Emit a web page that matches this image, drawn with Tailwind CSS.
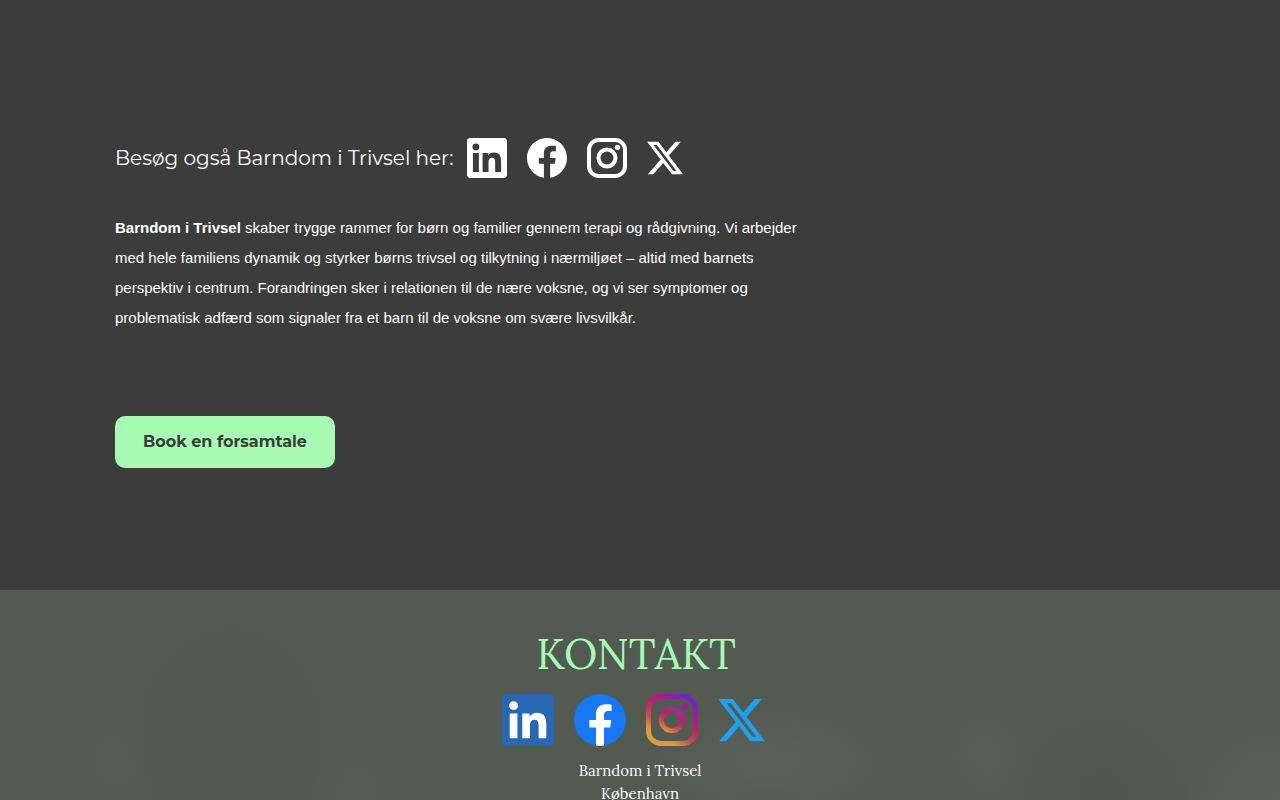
<!DOCTYPE html>
<html lang="da">

<head>
    <meta charset="UTF-8">
    <meta name="viewport" content="width=device-width, initial-scale=1.0">
    <title>Barndom i Trivsel</title>
    <script src="https://cdn.jsdelivr.net/npm/@tailwindcss/browser@4"></script>
</head>

<body class="bg-[#3c3c3c] font-['Liberation_Sans',Arial,sans-serif] text-white">
    <!-- Shared icon shapes -->
    <svg class="hidden" aria-hidden="true">
        <symbol id="linkedin" viewBox="0 0 24 24">
            <path d="M20.447 20.452h-3.554v-5.569c0-1.328-.027-3.037-1.852-3.037-1.853 0-2.136 1.445-2.136 2.939v5.667H9.351V9h3.414v1.561h.046c.477-.9 1.637-1.85 3.37-1.85 3.601 0 4.267 2.37 4.267 5.455v6.286zM5.337 7.433a2.062 2.062 0 0 1-2.063-2.065 2.064 2.064 0 1 1 2.063 2.065zm1.782 13.019H3.555V9h3.564v11.452zM22.225 0H1.771C.792 0 0 .774 0 1.729v20.542C0 23.227.792 24 1.771 24h20.451C23.2 24 24 23.227 24 22.271V1.729C24 .774 23.2 0 22.222 0h.003z"/>
        </symbol>
        <symbol id="facebook" viewBox="0 0 24 24">
            <path d="M24 12c0-6.627-5.373-12-12-12S0 5.373 0 12c0 5.99 4.388 10.954 10.125 11.854v-8.385H7.078V12h3.047V9.357c0-3.007 1.792-4.669 4.533-4.669 1.312 0 2.686.235 2.686.235v2.953H15.83c-1.491 0-1.956.925-1.956 1.874V12h3.328l-.532 3.469h-2.796v8.385C19.612 22.954 24 17.989 24 12z"/>
        </symbol>
        <symbol id="x" viewBox="1.2 0 24 24">
            <path d="M18.244 2.25h3.308l-7.227 8.26 8.502 11.24H16.17l-5.214-6.817L4.99 21.75H1.68l7.73-8.835L1.254 2.25H8.08l4.713 6.231zm-1.161 17.52h1.833L7.084 4.126H5.117z"/>
        </symbol>
    </svg>

    <section>
        <div class="max-w-[1050px] mx-auto pt-[138px] pb-[122px]">
            <div class="flex items-center gap-3.5">
                <h2 class="font-[Montserrat,Inter,sans-serif] text-[20px] leading-10">Besøg også Barndom i Trivsel her:</h2>
                <div class="flex gap-5">
                    <a href="#" aria-label="LinkedIn"><svg class="size-10 fill-white"><use href="#linkedin"/></svg></a>
                    <a href="#" aria-label="Facebook"><svg class="size-10 fill-white"><use href="#facebook"/></svg></a>
                    <a href="#" aria-label="Instagram">
                        <svg class="size-10" viewBox="0 0 24 24" fill="none" stroke="white" stroke-width="2.4">
                            <rect x="1.2" y="1.2" width="21.6" height="21.6" rx="5.9"/>
                            <circle cx="12" cy="12" r="5.1"/>
                            <circle cx="18.3" cy="5.6" r="1.6" fill="white" stroke="none"/>
                        </svg>
                    </a>
                    <a href="#" aria-label="X"><svg class="size-10 fill-white"><use href="#x"/></svg></a>
                </div>
            </div>
            <p class="max-w-[700px] mt-[35px] text-[15px] leading-[30px]"><strong>Barndom i Trivsel</strong> skaber trygge rammer for børn og familier gennem terapi og rådgivning. Vi arbejder med hele familiens dynamik og styrker børns trivsel og tilkytning i nærmiljøet – altid med barnets perspektiv i centrum. Forandringen sker i relationen til de nære voksne, og vi ser symptomer og problematisk adfærd som signaler fra et barn til de voksne om svære livsvilkår.</p>
            <a href="#" class="inline-flex items-center justify-center mt-[83px] w-[220px] h-[52px] rounded-[10px] bg-[#a7fbb2] text-[#3c3c3c] font-[Montserrat,Inter,sans-serif] text-[16px] font-bold align-top">Book en forsamtale</a>
        </div>
    </section>

    <!-- Contact -->
    <footer class="flex flex-col items-center pt-9 pb-10 min-h-[260px] bg-[#525a52] bg-[radial-gradient(ellipse_100px_120px_at_18%_58%,#4e5850_50%,transparent),radial-gradient(ellipse_130px_60px_at_60%_66%,#5b605b,transparent),radial-gradient(ellipse_50px_70px_at_28%_78%,#555c56,transparent),radial-gradient(ellipse_50px_60px_at_9%_66%,#545c54,transparent),radial-gradient(ellipse_50px_60px_at_77%_63%,#555d56,transparent),radial-gradient(ellipse_90px_80px_at_86%_78%,#4d574f,transparent),radial-gradient(ellipse_100px_100px_at_100%_86%,#5a605b,transparent)] font-[Lora,'Liberation_Serif',serif]">
        <div class="flex flex-col items-center pr-2">
            <h2 class="text-[42px] leading-[56px] text-[#a7fbb2]">KONTAKT</h2>
            <div class="flex gap-5 mt-3">
                <a href="#" aria-label="LinkedIn">
                    <svg class="size-[52px]" viewBox="0 0 24 24">
                        <rect x="1" y="1" width="22" height="22" fill="white"/>
                        <use href="#linkedin" fill="#2867b2"/>
                    </svg>
                </a>
                <a href="#" aria-label="Facebook">
                    <svg class="size-[52px]" viewBox="0 0 24 24">
                        <path d="M6 4h12v13h-4.1v6.8a12 12 0 0 1-3.8 0V17H6z" fill="white"/>
                        <use href="#facebook" fill="#1877f2"/>
                    </svg>
                </a>
                <a href="#" aria-label="Instagram">
                    <svg class="size-[52px]" viewBox="0 0 24 24" fill="none" stroke-width="2.3">
                        <defs>
                            <linearGradient id="frame" gradientUnits="userSpaceOnUse" x1="5" y1="23" x2="19" y2="1">
                                <stop offset=".15" stop-color="#e09b3d"/>
                                <stop offset=".35" stop-color="#c74c4d"/>
                                <stop offset=".6" stop-color="#c21975"/>
                                <stop offset="1" stop-color="#7024c4"/>
                            </linearGradient>
                            <linearGradient id="lens" gradientUnits="userSpaceOnUse" x1="9" y1="17.5" x2="15" y2="6.5">
                                <stop offset="0" stop-color="#e09b3d"/>
                                <stop offset=".3" stop-color="#c74c4d"/>
                                <stop offset=".6" stop-color="#c21975"/>
                                <stop offset="1" stop-color="#a22a9e"/>
                            </linearGradient>
                        </defs>
                        <rect x="1.15" y="1.15" width="21.7" height="21.7" rx="5.8" stroke="url(#frame)"/>
                        <circle cx="12" cy="12" r="4.9" stroke="url(#lens)"/>
                        <circle cx="18.1" cy="5.6" r="1.45" fill="#a01d96"/>
                    </svg>
                </a>
                <a href="#" aria-label="X"><svg class="size-[52px] fill-[#1da1f2]"><use href="#x"/></svg></a>
            </div>
        </div>
        <address class="not-italic text-center text-[15px] leading-[23px] mt-[13px]">
            Barndom i Trivsel<br>
            København
        </address>
    </footer>
</body>

</html>
